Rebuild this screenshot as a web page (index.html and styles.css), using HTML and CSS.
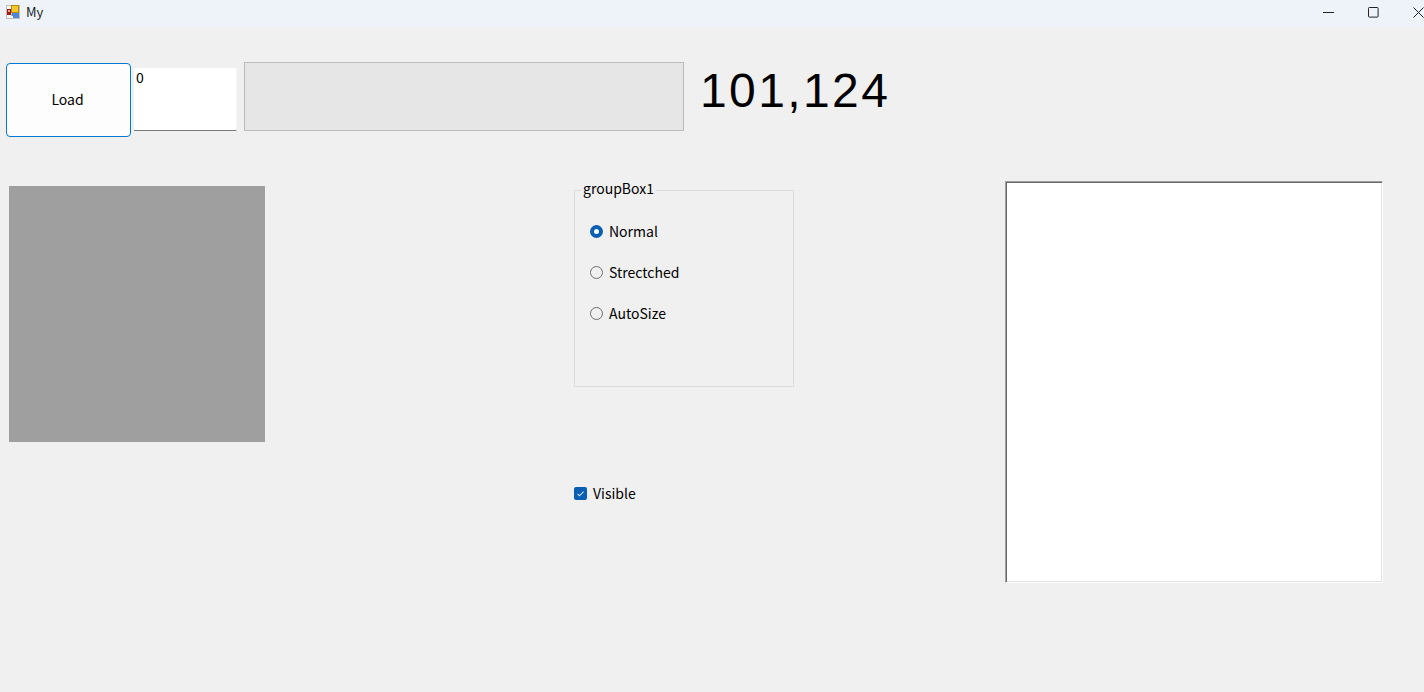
FILE: index.html
```html
<!DOCTYPE html>
<html lang="en">
<head>
<meta charset="utf-8">
<title>My</title>
<link rel="stylesheet" href="styles.css">
</head>
<body>
<div class="window">
  <header class="titlebar">
    <svg class="app-icon" width="14" height="14" viewBox="0 0 14 14">
      <rect x="0" y="0" width="14" height="14" fill="#bdbdbd"/>
      <rect x="1" y="1" width="4" height="3" fill="#f4f4f4"/>
      <rect x="1" y="10" width="4" height="3" fill="#f4f4f4"/>
      <rect x="1" y="4" width="4" height="6" fill="#a81818"/>
      <rect x="2" y="5" width="2" height="2" fill="#e6a0a0"/>
      <rect x="5" y="0" width="8" height="8" fill="#b58a10"/>
      <rect x="6" y="1" width="6" height="6" fill="#f7c928"/>
      <rect x="6" y="8" width="7" height="5" fill="#4f86d8"/>
      <rect x="5" y="11" width="2" height="2" fill="#f4f4f4"/>
    </svg>
    <span class="app-title">My</span>
    <div class="window-controls">
      <svg width="11" height="11" viewBox="0 0 11 11"><path d="M0 5.5H11" stroke="#222" fill="none"/></svg>
      <svg width="11" height="11" viewBox="0 0 11 11"><rect x=".5" y=".5" width="9.6" height="9.6" rx=".8" stroke="#222" fill="none"/></svg>
      <svg width="11" height="11" viewBox="0 0 11 11"><path d="M.5 .5L10.5 10.5M10.5 .5L.5 10.5" stroke="#222" fill="none"/></svg>
    </div>
  </header>

  <section class="toolbar">
    <button class="load-button">Load</button>
    <div class="textbox">0</div>
    <div class="progress"></div>
    <div class="counter">101,124</div>
  </section>

  <main class="workspace">
    <div class="picture"></div>
    <div class="options">
      <fieldset class="groupbox">
        <legend>groupBox1</legend>
        <label class="radio-row"><span class="radio selected"></span>Normal</label>
        <label class="radio-row"><span class="radio"></span>Strectched</label>
        <label class="radio-row"><span class="radio"></span>AutoSize</label>
      </fieldset>
      <label class="check-row">
        <span class="checkbox">
          <svg width="13" height="13" viewBox="0 0 13 13"><path d="M3.5 6.8L5.5 8.8L9.6 4.6" stroke="#cfe2f5" stroke-width="1.1" fill="none"/></svg>
        </span>Visible
      </label>
    </div>
    <div class="panel"></div>
  </main>
</div>
</body>
</html>
```
FILE: styles.css
```css
* { box-sizing: border-box; }
html, body { margin: 0; height: 100%; }
body {
  background: #f0f0f0;
  font-family: "Noto Sans CJK KR", "Noto Sans", sans-serif;
  font-size: 14px;
  color: #000;
  overflow: hidden;
}
.window { width: 1424px; height: 692px; display: flex; flex-direction: column; }

.titlebar {
  height: 27px;
  background: #eef3fa;
  display: flex;
  align-items: center;
  padding: 0 0 4px 6px;
  flex: none;
}
.app-icon { flex: none; }
.app-title { margin-left: 6px; font-size: 13px; color: #1a1a1a; }
.window-controls {
  margin-left: auto;
  display: flex;
  gap: 34px;
  padding-top: 1px;
  align-items: center;
}

.toolbar {
  display: flex;
  align-items: flex-start;
  padding: 35px 0 0 6px;
  height: 154px;
  flex: none;
}
.load-button {
  width: 125px;
  height: 74px;
  margin-top: 1px;
  background: #fdfdfd;
  border: 1px solid #0078d4;
  border-radius: 4px;
  font: inherit;
  padding: 0 2px 2px 0;
  color: #000;
}
.textbox {
  width: 103px;
  height: 63px;
  margin: 6px 0 0 3px;
  background: #fff;
  border-right: 1px solid #f5f5f5;
  border-bottom: 1px solid #7a7a7a;
  padding: 0 2px;
  line-height: 19px;
}
.progress {
  width: 440px;
  height: 69px;
  margin-left: 7px;
  background: #e6e6e6;
  border: 1px solid #bcbcbc;
}
.counter {
  margin-left: 16px;
  font-family: "Liberation Sans", Arial, sans-serif;
  font-size: 48px;
  letter-spacing: 2.4px;
  line-height: 58px;
}

.workspace {
  display: flex;
  align-items: flex-start;
  padding-left: 9px;
  flex: 1;
}
.picture {
  width: 256px;
  height: 256px;
  margin-top: 5px;
  background: #9f9f9f;
  flex: none;
}
.options {
  width: 220px;
  margin-left: 309px;
  margin-top: -1px;
  flex: none;
}
.groupbox {
  width: 220px;
  height: 207px;
  margin: 0;
  padding: 0 0 0 15px;
  border: 1px solid #dcdcdc;
  display: flex;
  flex-direction: column;
  min-width: 0;
}
.groupbox legend {
  margin-left: -9px;
  padding: 0 2px;
  line-height: 16px;
  height: 20px;
  font-size: 14px;
}
.radio-row {
  display: flex;
  align-items: center;
  gap: 6px;
  height: 41px;
  padding-bottom: 2px;
  line-height: 20px;
}
.groupbox legend + .radio-row { margin-top: 11px; }
.radio {
  width: 13px;
  height: 13px;
  margin-top: 2px;
  border-radius: 50%;
  border: 1px solid #6e6e6e;
  flex: none;
}
.radio.selected {
  border: 4px solid #0a5fb4;
  background: #fff;
}
.check-row {
  display: flex;
  align-items: center;
  gap: 6px;
  margin-top: 96px;
  height: 20px;
}
.checkbox {
  width: 13px;
  height: 13px;
  border-radius: 2px;
  background: #0a5fb4;
  flex: none;
  display: flex;
}
.panel {
  width: 378px;
  height: 402px;
  margin-left: 211px;
  background: #fff;
  border-style: solid;
  border-width: 1px;
  border-color: #a0a0a0 #fff #fff #a0a0a0;
  box-shadow: inset 1px 1px 0 #696969, inset -1px -1px 0 #e3e3e3;
  flex: none;
}
```
